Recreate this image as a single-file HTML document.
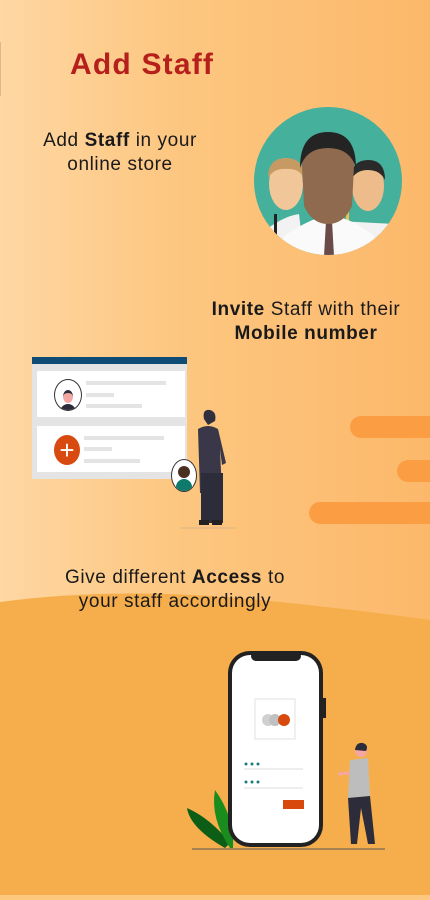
<!DOCTYPE html>
<html><head><style>
body{margin:0;width:430px;height:900px;overflow:hidden;position:relative;font-family:"Liberation Sans",sans-serif;background:linear-gradient(90deg,#fed7a3 0%,#fdc781 40%,#fcb86a 100%);}
.t{position:absolute;color:#1a1a1a;font-size:19px;line-height:24px;text-align:center;letter-spacing:0.6px;white-space:nowrap;}
b{font-weight:bold}
.pill{position:absolute;background:#fb9e43;border-radius:12px;}
</style></head><body>
<div style="position:absolute;left:0;top:42px;width:1px;height:54px;background:#d9b890"></div>
<div style="position:absolute;left:70px;top:48px;font-size:30px;font-weight:bold;color:#b51f1c;letter-spacing:1.2px;">Add Staff</div>
<div class="t" style="left:10px;top:129px;width:220px;">Add <b>Staff</b> in your<br>online store</div>
<svg style="position:absolute;left:254px;top:106px" width="148" height="150" viewBox="0 0 148 150">
<defs><clipPath id="c"><circle cx="74" cy="75" r="74"/></clipPath></defs>
<circle cx="74" cy="75" r="74" fill="#45b09b"/>
<g clip-path="url(#c)">
<path d="M10 125 Q30 110 45 108 L50 150 L0 150Z" fill="#f2f2f2"/>
<ellipse cx="32" cy="78" rx="17" ry="26" fill="#f1c79a"/><path d="M14 72 Q14 52 32 52 Q50 52 50 72 Q45 62 32 63 Q20 62 14 72Z" fill="#c79a64"/>
<ellipse cx="114" cy="80" rx="16" ry="25" fill="#eebc8a"/><path d="M97 74 Q97 54 114 54 Q131 54 131 74 Q126 64 114 64 Q102 64 97 74Z" fill="#2a2a2a"/>
<path d="M85 115 L140 118 L148 150 L85 150Z" fill="#f2f2f2"/>
<rect x="92" y="105" width="3" height="25" fill="#e8c35a"/>
<rect x="20" y="108" width="3" height="24" fill="#222"/>
<path d="M30 130 Q60 110 75 110 Q95 110 120 130 L125 150 L25 150Z" fill="#fafafa"/>
<path d="M72 115 L78 115 L80 150 L70 150Z" fill="#6b4a4a"/>
<path d="M48 60 Q48 30 74 30 Q100 30 100 60 L98 100 Q90 118 74 118 Q58 118 50 100Z" fill="#8f6a4e"/>
<path d="M46 62 Q46 26 74 26 Q102 26 102 62 Q96 42 74 42 Q52 42 46 62Z" fill="#242424"/>
</g></svg>
<div class="t" style="left:190px;top:298px;width:232px;">
<b>Invite</b> Staff with their<br><b>Mobile number</b></div>
<div style="position:absolute;left:32px;top:357px;width:155px;height:122px;background:#e4e4e4;">
<div style="height:7px;background:#0f4c75"></div>
<div style="position:absolute;left:5px;top:14px;width:148px;height:46px;background:#fff"></div>
<div style="position:absolute;left:5px;top:69px;width:148px;height:46px;background:#fff"></div>
<div style="position:absolute;left:22px;top:22px;width:26px;height:30px;border:1px solid #333;border-radius:50%;background:#fff;overflow:hidden"><div style="margin:10px 0 0 8px;width:10px;height:10px;background:#f4a6a0;border-radius:50%;border-top:3px solid #2d2c3a"></div><div style="margin:1px 0 0 5px;width:16px;height:10px;background:#2d2c3a;border-radius:8px 8px 0 0"></div></div>
<div style="position:absolute;left:22px;top:78px;width:26px;height:30px;border-radius:50%;background:#d84a0f;color:#fff;font-size:26px;line-height:30px;text-align:center">+</div>
<div style="position:absolute;left:54px;top:24px;width:80px;height:4px;background:#e4e4e4"></div>
<div style="position:absolute;left:54px;top:36px;width:28px;height:4px;background:#e4e4e4"></div>
<div style="position:absolute;left:54px;top:47px;width:56px;height:4px;background:#e4e4e4"></div>
<div style="position:absolute;left:52px;top:79px;width:80px;height:4px;background:#e4e4e4"></div>
<div style="position:absolute;left:52px;top:90px;width:28px;height:4px;background:#e4e4e4"></div>
<div style="position:absolute;left:52px;top:102px;width:56px;height:4px;background:#e4e4e4"></div>
</div>
<div style="position:absolute;left:171px;top:459px;width:24px;height:31px;border:1px solid #333;border-radius:50%;background:#fff;overflow:hidden"><div style="margin:6px 0 0 6px;width:12px;height:12px;background:#4a3020;border-radius:50%"></div><div style="margin:1px 0 0 4px;width:16px;height:12px;background:#0e7a6b;border-radius:8px 8px 0 0"></div></div>
<svg style="position:absolute;left:180px;top:405px" width="60" height="125">
<path d="M24 14 Q22 4 30 5 Q37 7 35 16 L28 20Z" fill="#2f2f3d"/>
<path d="M18 24 Q28 18 38 24 L46 58 L42 60 L40 44 L42 88 L20 88Z" fill="#3a3848"/>
<rect x="21" y="68" width="22" height="50" fill="#2d2c3a"/>
<rect x="19" y="115" width="10" height="5" fill="#222"/><rect x="32" y="115" width="10" height="5" fill="#222"/>
<line x1="0" y1="123" x2="55" y2="123" stroke="#d8b48a"/>
</svg>
<div class="pill" style="left:350px;top:416px;width:90px;height:22px"></div>
<div class="pill" style="left:397px;top:460px;width:50px;height:22px"></div>
<div class="pill" style="left:309px;top:502px;width:130px;height:22px"></div>
<svg style="position:absolute;left:0;top:592px" width="430" height="308"><path d="M0 10 Q120 -6 260 8 Q360 18 430 28 L430 308 L0 308Z" fill="#f6ae4c"/><rect x="0" y="303" width="430" height="5" fill="#fcc87f"/></svg>
<div class="t" style="left:20px;top:566px;width:310px;">Give different <b>Access</b> to<br>your staff accordingly</div>
<svg style="position:absolute;left:185px;top:648px" width="205" height="205">
<line x1="7" y1="201" x2="200" y2="201" stroke="#555" stroke-width="1"/>
<path d="M40 200 Q5 180 2 160 Q25 170 45 195Z" fill="#0c5e16"/><path d="M45 200 Q25 170 30 142 Q50 170 48 200Z" fill="#1a8c1e"/>
<rect x="43" y="3" width="95" height="196" rx="22" fill="#222"/><rect x="47" y="7" width="87" height="188" rx="18" fill="#fff"/>
<rect x="66" y="3" width="50" height="10" rx="5" fill="#222"/><rect x="138" y="50" width="3" height="20" fill="#222"/>
<rect x="70" y="51" width="40" height="40" fill="#fff" stroke="#e0e0e0"/>
<circle cx="83" cy="72" r="6" fill="#d0d0d0"/><circle cx="90" cy="72" r="6" fill="#c0c0c0"/><circle cx="99" cy="72" r="6" fill="#d8490d"/>
<g fill="#1a7f7a"><circle cx="61" cy="116" r="1.5"/><circle cx="67" cy="116" r="1.5"/><circle cx="73" cy="116" r="1.5"/><circle cx="61" cy="134" r="1.5"/><circle cx="67" cy="134" r="1.5"/><circle cx="73" cy="134" r="1.5"/></g>
<line x1="59" y1="121" x2="118" y2="121" stroke="#ddd"/><line x1="59" y1="140" x2="118" y2="140" stroke="#ddd"/>
<rect x="98" y="152" width="21" height="9" fill="#d8490d"/>
<circle cx="176" cy="103" r="6" fill="#f4a6a0"/><path d="M170 102 Q171 94 178 95 Q184 97 181 103Z" fill="#2d2c3a"/>
<path d="M165 112 L183 110 L185 148 L163 150Z" fill="#bdbdbd"/><path d="M165 125 L153 126" stroke="#f4a6a0" stroke-width="3"/>
<path d="M163 150 L185 148 L190 196 L183 196 L176 160 L172 196 L166 196Z" fill="#2d2c3a"/>
</svg>
</body></html>
